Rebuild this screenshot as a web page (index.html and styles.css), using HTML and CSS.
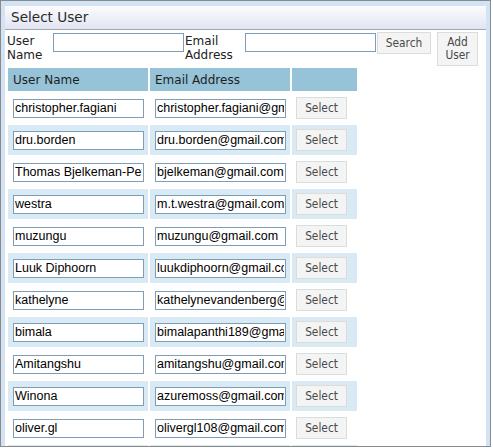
FILE: index.html
```html
<!DOCTYPE html>
<html>
<head>
<meta charset="utf-8">
<link rel="stylesheet" href="styles.css">
</head>
<body>
<div class="frame">
  <div class="panel">
    <div class="titlebar">Select User</div>
    <div class="content">
      <div class="search">
        <label class="lbl lbl-user">User Name</label>
        <input class="field" type="text">
        <label class="lbl lbl-email">Email Address</label>
        <input class="field" type="text">
        <button class="btn btn-search">Search</button>
        <button class="btn btn-add">Add User</button>
      </div>
      <table class="users">
        <thead>
          <tr><th class="c1">User Name</th><th class="c2">Email Address</th><th class="c3"></th></tr>
        </thead>
        <tbody>
          <tr><td class="c1"><input class="cell-in" value="christopher.fagiani"></td><td class="c2"><input class="cell-in" value="christopher.fagiani@gmail.com"></td><td class="c3"><button class="btn sel">Select</button></td></tr>
          <tr class="alt"><td class="c1"><input class="cell-in" value="dru.borden"></td><td class="c2"><input class="cell-in" value="dru.borden@gmail.com"></td><td class="c3"><button class="btn sel">Select</button></td></tr>
          <tr><td class="c1"><input class="cell-in" value="Thomas Bjelkeman-Pettersson"></td><td class="c2"><input class="cell-in" value="bjelkeman@gmail.com"></td><td class="c3"><button class="btn sel">Select</button></td></tr>
          <tr class="alt"><td class="c1"><input class="cell-in" value="westra"></td><td class="c2"><input class="cell-in" value="m.t.westra@gmail.com"></td><td class="c3"><button class="btn sel">Select</button></td></tr>
          <tr><td class="c1"><input class="cell-in" value="muzungu"></td><td class="c2"><input class="cell-in" value="muzungu@gmail.com"></td><td class="c3"><button class="btn sel">Select</button></td></tr>
          <tr class="alt"><td class="c1"><input class="cell-in" value="Luuk Diphoorn"></td><td class="c2"><input class="cell-in" value="luukdiphoorn@gmail.com"></td><td class="c3"><button class="btn sel">Select</button></td></tr>
          <tr><td class="c1"><input class="cell-in" value="kathelyne"></td><td class="c2"><input class="cell-in" value="kathelynevandenberg@gmail.com"></td><td class="c3"><button class="btn sel">Select</button></td></tr>
          <tr class="alt"><td class="c1"><input class="cell-in" value="bimala"></td><td class="c2"><input class="cell-in" value="bimalapanthi189@gmail.com"></td><td class="c3"><button class="btn sel">Select</button></td></tr>
          <tr><td class="c1"><input class="cell-in" value="Amitangshu"></td><td class="c2"><input class="cell-in" value="amitangshu@gmail.com"></td><td class="c3"><button class="btn sel">Select</button></td></tr>
          <tr class="alt"><td class="c1"><input class="cell-in" value="Winona"></td><td class="c2"><input class="cell-in" value="azuremoss@gmail.com"></td><td class="c3"><button class="btn sel">Select</button></td></tr>
          <tr><td class="c1"><input class="cell-in" value="oliver.gl"></td><td class="c2"><input class="cell-in" value="olivergl108@gmail.com"></td><td class="c3"><button class="btn sel">Select</button></td></tr>
          <tr class="alt"><td class="c1"></td><td class="c2"></td><td class="c3"></td></tr>
        </tbody>
      </table>
    </div>
  </div>
</div>
</body>
</html>
```

FILE: styles.css
```css
html, body {
  margin: 0;
  padding: 0;
  background: #ffffff;
}

.frame {
  box-sizing: border-box;
  width: 491px;
  height: 447px;
  border: 1px solid #8a8a8a;
  background: #d2e3f6;
  padding: 5px 4px 0 4px;
  overflow: hidden;
}

.panel {
  height: 100%;
  display: flex;
  flex-direction: column;
}

.titlebar {
  box-sizing: border-box;
  height: 24px;
  border-bottom: 1px solid #a3a7b0;
  background: linear-gradient(to bottom, #fcfcfe 0%, #e1e4f2 100%);
  font-family: "DejaVu Sans", Verdana, sans-serif;
  font-size: 13.6px;
  line-height: 23px;
  color: #2a2a2a;
  padding-left: 6px;
}

.content {
  flex: 1;
  background: #ffffff;
  padding: 0 0 0 1px;
  overflow: hidden;
}

.search {
  display: flex;
  align-items: flex-start;
  padding-top: 2px;
}

.lbl {
  font-family: "DejaVu Sans", Verdana, sans-serif;
  font-size: 12px;
  line-height: 14px;
  color: #222;
  margin-top: 2px;
}

.lbl-user {
  width: 46px;
  margin-left: 1px;
}

.lbl-email {
  width: 60px;
  margin-left: 1px;
}

.field {
  box-sizing: border-box;
  width: 131px;
  height: 19px;
  margin: 1px 0 0 0;
  border: 1px solid #7f9db9;
  padding: 0 1px;
  font-family: "Liberation Sans", Arial, sans-serif;
  font-size: 12.5px;
  background: #fff;
  outline: none;
}

.btn {
  box-sizing: border-box;
  background: #f4f4f4;
  border: 1px solid #dcdcdc;
  border-radius: 0;
  color: #4a4a4a;
  font-family: "DejaVu Sans Condensed", "DejaVu Sans", sans-serif;
  font-size: 11.8px;
  line-height: 13px;
  padding: 0;
  margin: 0;
}

.btn-search {
  width: 54px;
  height: 22px;
  margin-left: 1px;
}

.btn-add {
  width: 41px;
  height: 34px;
  margin-left: 6px;
  padding: 2px 0;
}

.users {
  border-collapse: separate;
  border-spacing: 2px;
  table-layout: fixed;
  width: 353px;
}

.users th {
  box-sizing: border-box;
  height: 23px;
  background: #96c3d7;
  text-align: left;
  font-family: "DejaVu Sans", Verdana, sans-serif;
  font-size: 12px;
  font-weight: normal;
  color: #1e1e1e;
  padding: 0 0 0 5px;
  vertical-align: middle;
}

.users th.c1, .users td.c1 { width: 140px; }
.users th.c2, .users td.c2 { width: 140px; }
.users th.c3, .users td.c3 { width: 65px; }

.users td {
  box-sizing: border-box;
  height: 30px;
  padding: 0 0 0 5px;
  vertical-align: middle;
}

.users td.c3 {
  padding-left: 4px;
}

.users tr.alt td {
  background: #d8eaf4;
}

.cell-in {
  display: block;
  box-sizing: border-box;
  width: 131px;
  height: 19px;
  margin: 0;
  border: 1px solid #7f9db9;
  padding: 0 1px;
  font-family: "Liberation Sans", Arial, sans-serif;
  font-size: 12.5px;
  color: #000;
  background: #fff;
  outline: none;
}

.sel {
  display: block;
  width: 51px;
  height: 22px;
}
```
